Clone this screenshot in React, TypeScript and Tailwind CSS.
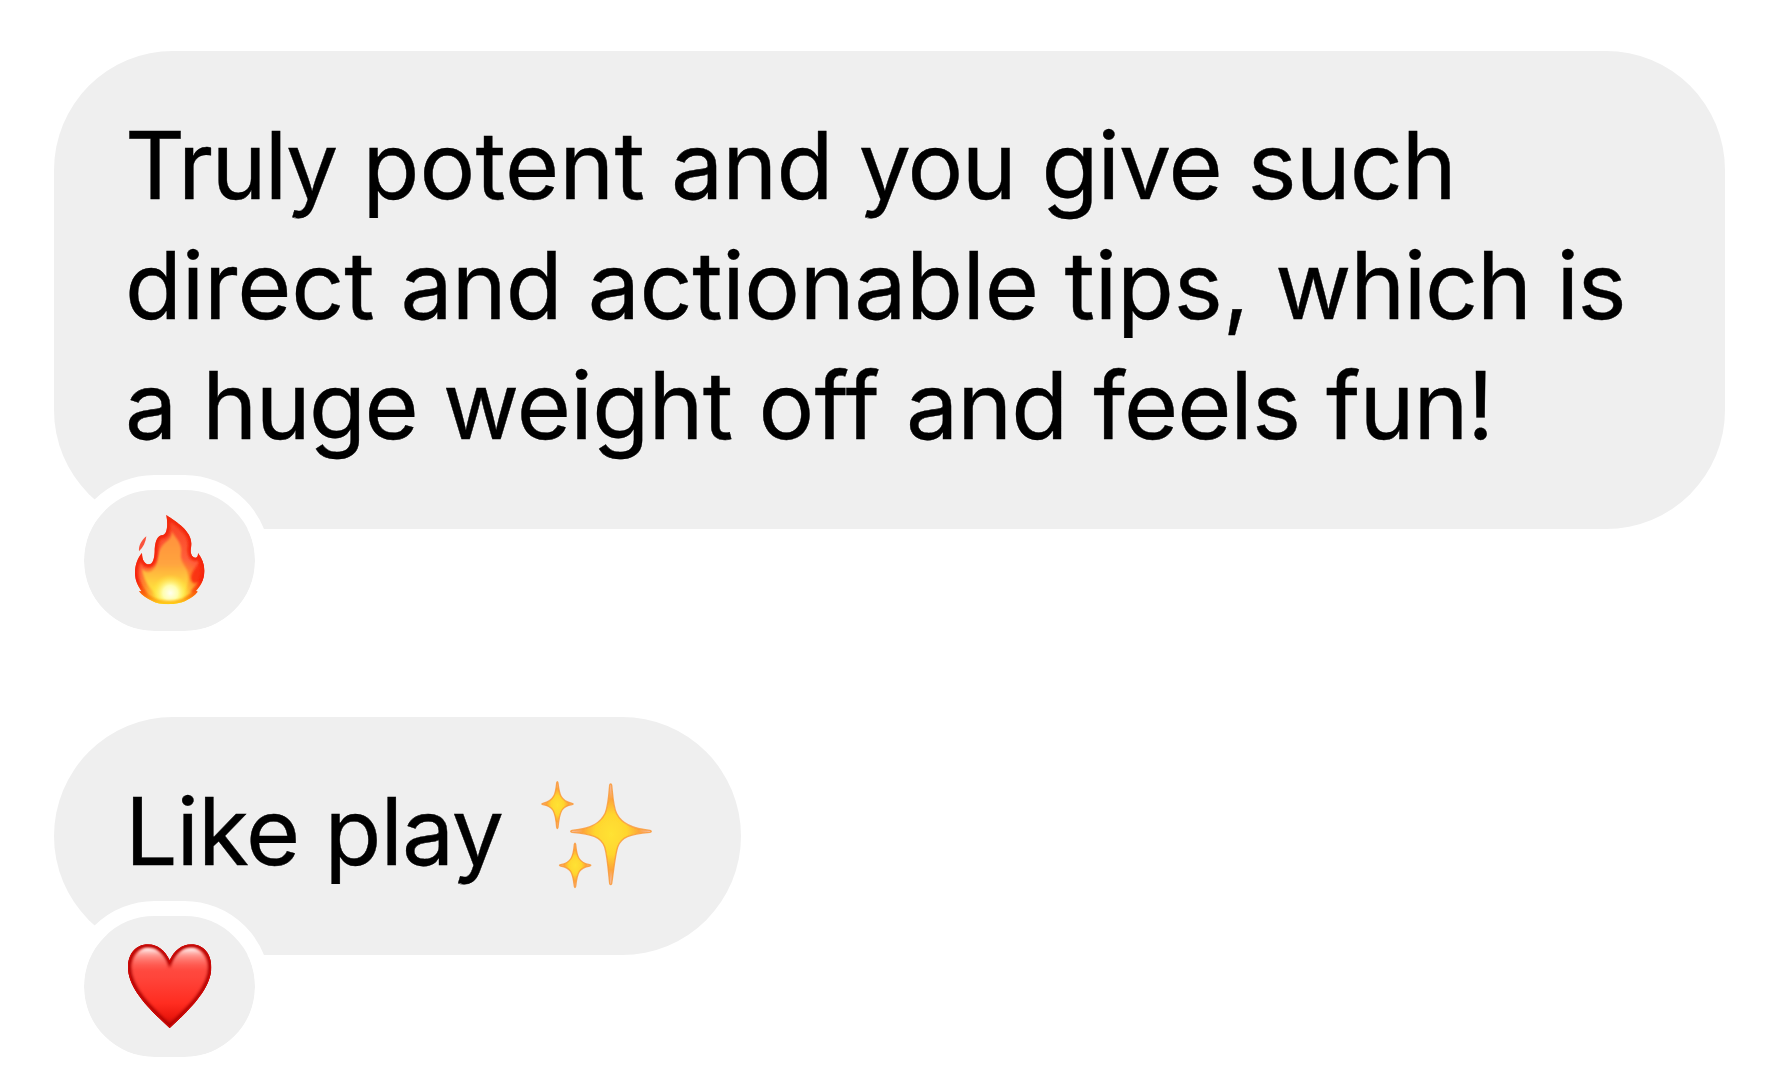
import type { ReactNode } from 'react';
import clsx from 'clsx';

interface BubbleProps {
  children: ReactNode;
  reaction: ReactNode;
  className?: string;
}

interface Word {
  text: string;
  tracking?: string;
}

const lines: Word[][] = [
  [
    { text: 'Truly', tracking: 'tracking-[-1.7px]' },
    { text: 'potent', tracking: 'tracking-[0.1px]' },
    { text: 'and', tracking: 'tracking-[-0.8px]' },
    { text: 'you', tracking: 'tracking-[-1.5px]' },
    { text: 'give', tracking: 'tracking-[-1px]' },
    { text: 'such', tracking: 'tracking-[-1px]' },
  ],
  [
    { text: 'direct', tracking: 'tracking-[-0.2px]' },
    { text: 'and', tracking: 'tracking-[-1px]' },
    { text: 'actionable', tracking: 'tracking-[-0.4px]' },
    { text: 'tips,', tracking: 'tracking-[-0.2px]' },
    { text: 'which', tracking: 'tracking-[-1.3px]' },
    { text: 'is', tracking: 'tracking-[-1.5px]' },
  ],
  [
    { text: 'a', tracking: 'tracking-[-1px]' },
    { text: 'huge', tracking: 'tracking-[-1.6px]' },
    { text: 'weight', tracking: 'tracking-[-0.7px]' },
    { text: 'off', tracking: 'tracking-[0.2px]' },
    { text: 'and', tracking: 'tracking-[-1px]' },
    { text: 'feels', tracking: 'tracking-[-1px]' },
    { text: 'fun!', tracking: 'tracking-[-1px]' },
  ],
];

const firePath =
  'M140 42C172 64 215 90 215 128C215 141 210 152 217 164C224 173 236 173 235 156C248 174 255 193 254 212C253 236 242 256 229 269L234 272C224 284 216 290 202 297C180 312 122 314 98 300C82 293 68 284 58 271L66 271C56 256 46 240 46 215C46 190 55 170 67 156C67 178 76 191 88 190C100 189 104 172 105 152C105 130 110 106 125 103C144 105 145 70 140 42Z';

const heartPath =
  'M387 239C374 211 350 191 322 191C286 191 262 220 262 260C262 324 326 386 387 442C448 386 512 324 512 260C512 220 488 191 452 191C424 191 400 211 387 239Z';

const FireIcon = () => (
  <svg viewBox="40 36 220 280" className="mb-px ml-0.5 w-[73.333px] h-[93.333px]">
    <defs>
      <radialGradient id="fire-base" gradientUnits="userSpaceOnUse" cx="152" cy="278" r="190">
        <stop offset="0" stopColor="#fff36a" />
        <stop offset="0.2" stopColor="#ffe23c" />
        <stop offset="0.42" stopColor="#ff8a2c" />
        <stop offset="0.6" stopColor="#ff5f3a" />
        <stop offset="1" stopColor="#fa4a2a" />
      </radialGradient>
      <linearGradient id="fire-inner" x1="0" y1="0" x2="0" y2="1">
        <stop offset="0" stopColor="#ff8f3d" />
        <stop offset="0.45" stopColor="#ffa43f" />
        <stop offset="0.75" stopColor="#ffd83c" />
        <stop offset="1" stopColor="#fff04a" />
      </linearGradient>
      <radialGradient id="fire-glow" gradientUnits="userSpaceOnUse" cx="152" cy="276" r="56">
        <stop offset="0" stopColor="#fffff0" />
        <stop offset="0.4" stopColor="#ffffb4" stopOpacity="0.95" />
        <stop offset="1" stopColor="#ffee32" stopOpacity="0" />
      </radialGradient>
      <linearGradient id="fire-edge" gradientUnits="userSpaceOnUse" x1="0" y1="42" x2="0" y2="308">
        <stop offset="0" stopColor="#f22a12" />
        <stop offset="0.75" stopColor="#f62408" />
        <stop offset="0.9" stopColor="#fb6a0c" />
        <stop offset="1" stopColor="#ffcf18" />
      </linearGradient>
      <filter id="fire-soft" x="-20%" y="-20%" width="140%" height="140%">
        <feGaussianBlur stdDeviation="3.5" />
      </filter>
      <clipPath id="fire-clip">
        <path d={firePath} />
      </clipPath>
    </defs>
    <g clipPath="url(#fire-clip)">
      <rect x="40" y="36" width="220" height="280" fill="url(#fire-base)" />
      <path
        d="M156 90C164 108 190 126 184 158C181 180 196 194 202 208C212 236 202 280 152 308C105 282 72 250 66 202C82 220 106 214 112 182C117 144 126 132 145 118C153 110 157 102 156 90Z"
        fill="url(#fire-inner)"
        filter="url(#fire-soft)"
      />
      <path
        d="M240 160C242 176 236 190 228 200C214 216 208 236 222 246L258 242V160Z"
        fill="#fa2a0c"
        opacity="0.85"
        filter="url(#fire-soft)"
      />
      <rect x="90" y="215" width="124" height="95" fill="url(#fire-glow)" />
      <path
        d={firePath}
        fill="none"
        stroke="url(#fire-edge)"
        strokeWidth="20"
        filter="url(#fire-soft)"
      />
    </g>
    <path d="M80 106C78 124 71 139 58 151C56 136 65 118 80 106Z" fill="#f9533c" />
  </svg>
);

const HeartIcon = () => (
  <svg viewBox="256 184 262 264" className="mb-px ml-px w-[87.333px] h-[88px]">
    <defs>
      <linearGradient id="heart-base" x1="0" y1="0" x2="0" y2="1">
        <stop offset="0" stopColor="#ff5a50" />
        <stop offset="0.4" stopColor="#ff453b" />
        <stop offset="0.7" stopColor="#ff2c20" />
        <stop offset="0.85" stopColor="#ec180e" />
        <stop offset="1" stopColor="#b80402" />
      </linearGradient>
      <linearGradient id="heart-shine" x1="0" y1="0" x2="0" y2="1">
        <stop offset="0" stopColor="#fff" />
        <stop offset="0.3" stopColor="#ffc4be" stopOpacity="0.65" />
        <stop offset="1" stopColor="#ff6a60" stopOpacity="0" />
      </linearGradient>
      <filter id="heart-soft" x="-20%" y="-20%" width="140%" height="140%">
        <feGaussianBlur stdDeviation="5" />
      </filter>
      <filter id="heart-shine-soft" x="-20%" y="-20%" width="140%" height="140%">
        <feGaussianBlur stdDeviation="2.5" />
      </filter>
      <clipPath id="heart-clip">
        <path d={heartPath} />
      </clipPath>
    </defs>
    <g clipPath="url(#heart-clip)">
      <rect x="256" y="184" width="262" height="264" fill="url(#heart-base)" />
      <path
        d={heartPath}
        fill="none"
        stroke="#a80000"
        strokeWidth="18"
        filter="url(#heart-soft)"
      />
      <g fill="url(#heart-shine)" filter="url(#heart-shine-soft)">
        <path d="M322 202C296 202 275 225 273 270H374C382 262 380 248 375 238C363 216 346 202 322 202Z" />
        <path d="M452 202C478 202 499 225 501 270H400C392 262 394 248 399 238C411 216 428 202 452 202Z" />
      </g>
      <path d={heartPath} fill="none" stroke="#cc0806" strokeWidth="9" />
    </g>
  </svg>
);

const SparklesIcon = () => (
  <svg viewBox="60 54 342 334" className="mt-2 w-[114px] h-[111.333px]">
    <defs>
      <radialGradient id="sparkle">
        <stop offset="0" stopColor="#ffe234" />
        <stop offset="0.4" stopColor="#ffd62e" />
        <stop offset="0.7" stopColor="#fda53a" />
        <stop offset="1" stopColor="#fb9060" stopOpacity="0.5" />
      </radialGradient>
      <filter id="sparkle-soft" x="-5%" y="-5%" width="110%" height="110%">
        <feGaussianBlur stdDeviation="1.6" />
      </filter>
    </defs>
    <g
      fill="url(#sparkle)"
      stroke="#fb9630"
      strokeOpacity="0.8"
      strokeWidth="4"
      strokeLinejoin="round"
      filter="url(#sparkle-soft)"
    >
      <path d="M269 72Q272 66 275 72C279 110 280 138 290 158C302 182 326 203 390 208Q398 211 390 214C328 220 304 228 293 258C285 284 281 330 275 368Q272 374 269 368C265 330 262 284 254 258C243 228 218 220 156 214Q148 211 156 208C220 203 243 182 255 158C264 138 266 110 269 72Z" />
      <path d="M110 66Q112 58 114 66C118 98 120 119 156 127Q163 129 156 131C126 136 119 148 114 199Q112 206 110 199C106 148 98 136 69 131Q62 129 69 127C103 119 107 98 110 66Z" />
      <path d="M163 250Q165 243 167 250C170 286 176 305 209 311Q216 313 209 315C178 321 172 332 167 376Q165 383 163 376C158 332 152 321 122 315Q115 313 122 311C154 305 160 286 163 250Z" />
    </g>
  </svg>
);

const Bubble = ({ children, reaction, className }: BubbleProps) => (
  <div className={clsx('relative rounded-[119px] bg-[#efefef] pl-[71.5px] pt-[54px]', className)}>
    {children}
    <div className="absolute left-[15px] -bottom-[117px] flex h-[171px] w-[201px] items-center justify-center rounded-full border-[15px] border-white bg-[#efefef] bg-clip-padding">
      {reaction}
    </div>
  </div>
);

const App = () => (
  <main className="flex h-[1076px] w-[1786px] flex-col items-start gap-[188px] overflow-hidden bg-white pl-[53.5px] pt-[50.5px] font-['Inter',sans-serif] text-[93px] leading-[120px] text-black [-webkit-text-stroke:0.4px_black]">
    <Bubble className="h-[478px] w-[1671px]" reaction={<FireIcon />}>
      {lines.map((words, i) => (
        <p key={i} className="flex gap-[26px] whitespace-nowrap">
          {words.map(({ text, tracking }) => (
            <span key={text} className={tracking}>
              {text}
            </span>
          ))}
        </p>
      ))}
    </Bubble>
    <Bubble className="h-[238px] w-[687px]" reaction={<HeartIcon />}>
      <p className="flex whitespace-nowrap">
        <span className="w-[415px] tracking-[-1px]">Like play</span>
        <SparklesIcon />
      </p>
    </Bubble>
  </main>
);

export default App;
